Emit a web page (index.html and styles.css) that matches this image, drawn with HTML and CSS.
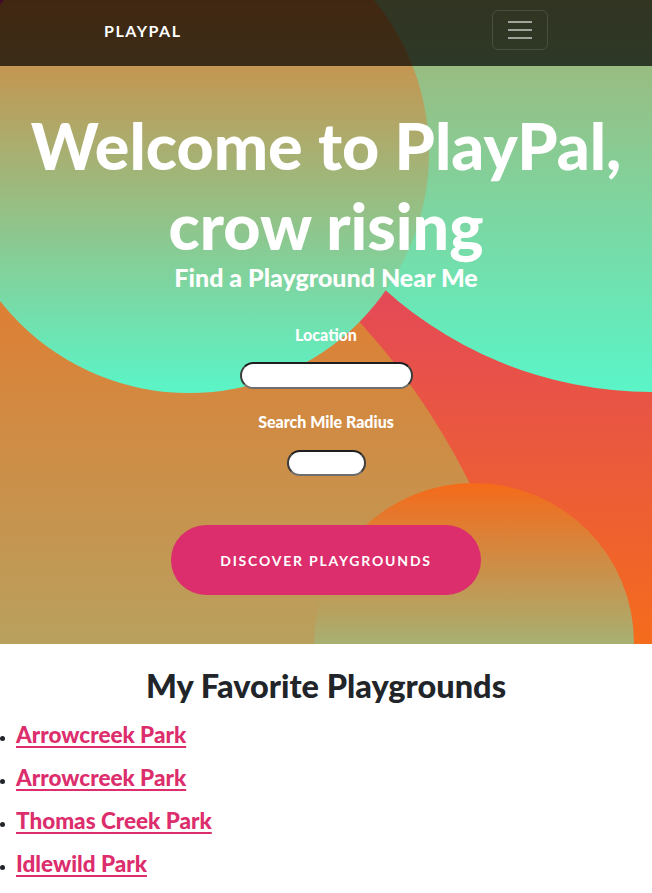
FILE: index.html
```html
<!DOCTYPE html>
<html lang="en">
<head>
<meta charset="utf-8">
<title>PlayPal</title>
<link rel="stylesheet" href="styles.css">
</head>
<body>
<nav class="navbar">
  <div class="nav-inner">
    <a class="brand" href="#">PlayPal</a>
    <button class="toggler" type="button" aria-label="Toggle navigation">
      <span class="bar"></span><span class="bar"></span><span class="bar"></span>
    </button>
  </div>
</nav>
<header class="masthead">
  <div class="bg-circle circle-1"></div>
  <div class="bg-circle circle-2"></div>
  <div class="bg-circle circle-3"></div>
  <div class="bg-circle circle-4"></div>
  <div class="masthead-content">
    <h1 class="title">Welcome to PlayPal,<br>crow rising</h1>
    <h2 class="subtitle">Find a Playground Near Me</h2>
    <form class="search">
      <label class="label" for="loc">Location</label>
      <input class="input input-loc" id="loc" type="text">
      <label class="label label-radius" for="rad">Search Mile Radius</label>
      <input class="input input-rad" id="rad" type="text">
      <button class="btn-discover" type="button">Discover Playgrounds</button>
    </form>
  </div>
</header>
<section class="favorites">
  <h2 class="fav-title">My Favorite Playgrounds</h2>
  <ul class="fav-list">
    <li><a href="#">Arrowcreek Park</a></li>
    <li><a href="#">Arrowcreek Park</a></li>
    <li><a href="#">Thomas Creek Park</a></li>
    <li><a href="#">Idlewild Park</a></li>
  </ul>
</section>
</body>
</html>
```

FILE: styles.css
```css
* { box-sizing: border-box; }
html, body { margin: 0; padding: 0; }
body {
  font-family: Lato, "Noto Sans", sans-serif;
  color: #212529;
  background: #fff;
  overflow-x: hidden;
}

.navbar {
  position: absolute;
  top: 0;
  left: 0;
  right: 0;
  z-index: 10;
  height: 66px;
  background: rgba(0, 0, 0, 0.7);
}
.nav-inner {
  height: 100%;
  padding: 0 104px;
  display: flex;
  align-items: center;
  justify-content: space-between;
}
.brand {
  color: #fff;
  text-decoration: none;
  text-transform: uppercase;
  font-weight: 700;
  font-size: 16px;
  letter-spacing: 1.5px;
  margin-top: -6px;
}
.toggler {
  width: 56px;
  height: 40px;
  margin-top: -7px;
  background: transparent;
  border: 1px solid rgba(255, 255, 255, 0.12);
  border-radius: 6px;
  display: flex;
  flex-direction: column;
  align-items: center;
  justify-content: center;
  gap: 6px;
  padding: 0;
}
.bar {
  display: block;
  width: 24px;
  height: 2px;
  background: rgba(255, 255, 255, 0.55);
}

.masthead {
  position: relative;
  overflow: hidden;
  height: 644px;
  background: linear-gradient(0deg, #f46c1c 0%, #d62d87 100%);
  text-align: center;
  color: #fff;
}
.bg-circle {
  position: absolute;
  border-radius: 50%;
  background: linear-gradient(0deg, #5af5c8 0%, #f56a1a 100%);
  z-index: 0;
}
.circle-1 { width: 1440px; height: 1440px; left: -895px; top: 84px; }
.circle-2 { width: 800px; height: 800px; left: 252px; top: -408px; }
.circle-3 { width: 320px; height: 320px; left: 314px; top: 483px; }
.circle-4 { width: 480px; height: 480px; left: -51px; top: -87px; }

.masthead-content {
  position: relative;
  z-index: 1;
  padding-top: 105px;
}
.title {
  margin: 0;
  font-size: 64.5px;
  line-height: 80px;
  font-weight: 900;
}
.subtitle {
  margin: -4px 0 0;
  font-size: 25px;
  line-height: 32px;
  font-weight: 900;
}
.search {
  display: flex;
  flex-direction: column;
  align-items: center;
}
.label {
  display: block;
  margin-top: 32px;
  font-size: 16px;
  line-height: 20px;
  font-weight: 900;
}
.label-radius { margin-top: 23px; }
.input {
  display: block;
  background: #fff;
  border-style: solid;
  border-width: 2px;
  border-color: #1e1e1e #3c3c3c #6e6e6e #3c3c3c;
  border-radius: 14px;
  padding: 1px 8px;
  font: 13px Lato, sans-serif;
}
.input-loc { width: 173px; height: 27px; margin-top: 17px; }
.input-rad { width: 79px; height: 26px; margin-top: 18px; }
.btn-discover {
  margin-top: 49px;
  width: 310px;
  height: 70px;
  border: none;
  border-radius: 35px;
  background: #dc2d6c;
  color: #fff;
  font-family: Lato, sans-serif;
  font-size: 14px;
  font-weight: 700;
  letter-spacing: 1.8px;
  text-transform: uppercase;
}

.favorites {
  padding-top: 23px;
}
.fav-title {
  margin: 0;
  text-align: center;
  font-size: 32.5px;
  line-height: 38px;
  font-weight: 900;
  color: #212529;
}
.fav-list {
  margin: 15px 0 0;
  padding-left: 16px;
  font-size: 14px;
}
.fav-list li {
  line-height: 30px;
  margin-bottom: 10px;
}
.fav-list a {
  color: #dc2d6c;
  font-size: 22.5px;
  font-weight: 900;
  text-decoration: underline;
  text-decoration-thickness: 2px;
  text-underline-offset: 3px;
}
```
